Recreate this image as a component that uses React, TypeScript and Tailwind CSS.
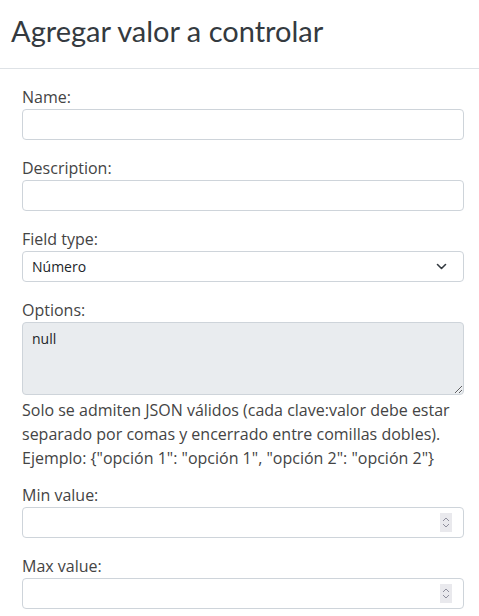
function Field({ label, children, className = 'mb-4' }: { label: string; children: React.ReactNode; className?: string }) {
  return (
    <div className={`flex flex-col ${className}`}>
      <label className="text-[16px] leading-6 text-[#444]">{label}</label>
      {children}
    </div>
  )
}

function TextInput() {
  return (
    <input
      type="text"
      className="h-[31px] w-full rounded-[4px] border border-[#ced4da] bg-white px-2 text-[14px] text-[#212529] outline-none"
    />
  )
}

function NumberInput() {
  return (
    <div className="relative">
      <input
        type="text"
        inputMode="numeric"
        className="h-[31px] w-full rounded-[4px] border border-[#ced4da] bg-white px-2 text-[14px] text-[#212529] outline-none"
      />
      <div className="pointer-events-none absolute right-[12px] top-[6px] flex h-[19px] w-[12px] items-center justify-center bg-[#e9e9ed]">
        <svg width="8" height="13" viewBox="0 0 8 13" fill="none" stroke="#8f8f9d" strokeWidth="1">
          <path d="M1 5 L4 2 L7 5" />
          <path d="M1 8 L4 11 L7 8" />
        </svg>
      </div>
    </div>
  )
}

export default function App() {
  return (
    <div className="min-h-screen bg-white font-['Open_Sans',sans-serif] text-[#444]">
      <div className="h-[69px] border-b border-[#dee2e6] pl-[11px] pt-[11px]">
        <h1 className="font-['Lato',sans-serif] text-[29px] leading-[40px] text-[#343a40]">
          Agregar valor a controlar
        </h1>
      </div>
      <form className="pl-[22px] pr-[15px] pt-[16px]">
        <Field label="Name:">
          <TextInput />
        </Field>
        <Field label="Description:">
          <TextInput />
        </Field>
        <Field label="Field type:">
          <div className="relative">
            <div className="flex h-[31px] w-full items-center rounded-[4px] border border-[#ced4da] bg-white pl-[9px] text-[14px] text-[#212529]">
              Número
            </div>
            <svg
              className="pointer-events-none absolute right-[17px] top-[12px]"
              width="11"
              height="7"
              viewBox="0 0 11 7"
              fill="none"
              stroke="#343a40"
              strokeWidth="1.6"
              strokeLinecap="round"
              strokeLinejoin="round"
            >
              <path d="M1.5 1.5 L5.5 5.5 L9.5 1.5" />
            </svg>
          </div>
        </Field>
        <Field label="Options:" className="mb-[13px]">
          <textarea
            disabled
            defaultValue="null"
            className="block h-[73px] w-full resize-y rounded-[4px] border border-[#ced4da] bg-[#e9ecef] px-[9px] py-[5px] text-[14px] leading-[21px] text-[#212529]"
          />
          <p className="mt-[3px] text-[16px] leading-6 text-[#444]">
            Solo se admiten JSON válidos (cada clave:valor debe estar separado por comas y encerrado entre comillas dobles). Ejemplo: {'{'}"opción 1": "opción 1", "opción 2": "opción 2"{'}'}
          </p>
        </Field>
        <Field label="Min value:">
          <NumberInput />
        </Field>
        <Field label="Max value:">
          <NumberInput />
        </Field>
      </form>
    </div>
  )
}
